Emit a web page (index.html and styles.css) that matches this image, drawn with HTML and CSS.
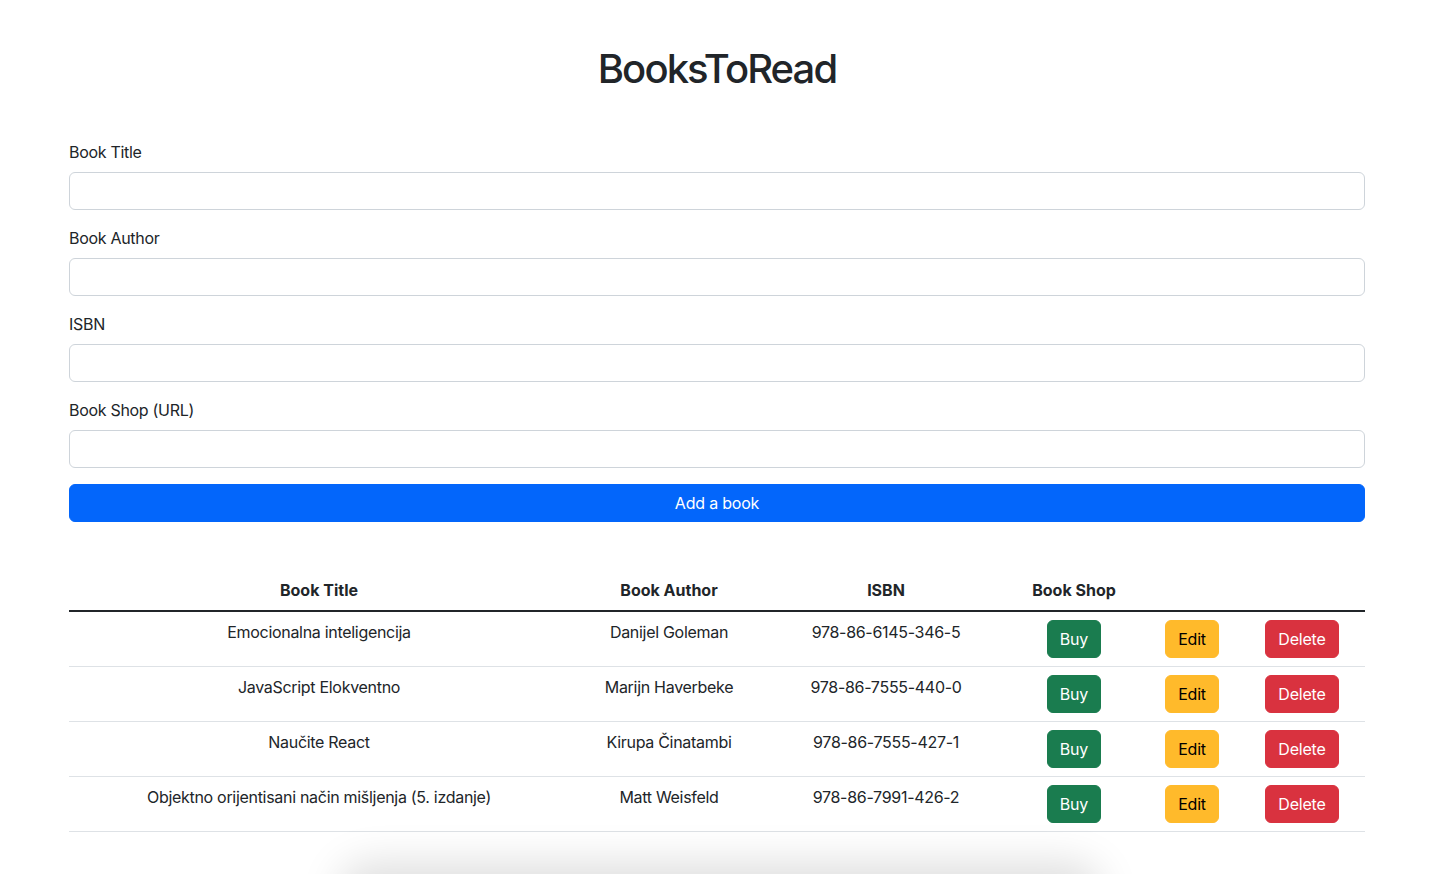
FILE: index.html
```html
<!DOCTYPE html>
<html lang="sr">
<head>
<meta charset="utf-8">
<title>BooksToRead</title>
<link rel="stylesheet" href="styles.css">
</head>
<body>
<div class="container">
  <h1 class="title">BooksToRead</h1>
  <form class="book-form">
    <div class="field">
      <label class="label" for="title">Book Title</label>
      <input class="input" id="title" type="text">
    </div>
    <div class="field">
      <label class="label" for="author">Book Author</label>
      <input class="input" id="author" type="text">
    </div>
    <div class="field">
      <label class="label" for="isbn">ISBN</label>
      <input class="input" id="isbn" type="text">
    </div>
    <div class="field">
      <label class="label" for="shop">Book Shop (URL)</label>
      <input class="input" id="shop" type="text">
    </div>
    <button type="button" class="btn btn-primary btn-block">Add a book</button>
  </form>

  <table class="books">
    <colgroup>
      <col class="c-title"><col class="c-author"><col class="c-isbn"><col class="c-shop"><col class="c-edit"><col class="c-delete">
    </colgroup>
    <thead>
      <tr><th>Book Title</th><th>Book Author</th><th>ISBN</th><th>Book Shop</th><th></th><th></th></tr>
    </thead>
    <tbody>
      <tr>
        <td>Emocionalna inteligencija</td><td>Danijel Goleman</td><td>978-86-6145-346-5</td>
        <td><button class="btn btn-success">Buy</button></td>
        <td><button class="btn btn-warning">Edit</button></td>
        <td><button class="btn btn-danger">Delete</button></td>
      </tr>
      <tr>
        <td>JavaScript Elokventno</td><td>Marijn Haverbeke</td><td>978-86-7555-440-0</td>
        <td><button class="btn btn-success">Buy</button></td>
        <td><button class="btn btn-warning">Edit</button></td>
        <td><button class="btn btn-danger">Delete</button></td>
      </tr>
      <tr>
        <td>Naučite React</td><td>Kirupa Činatambi</td><td>978-86-7555-427-1</td>
        <td><button class="btn btn-success">Buy</button></td>
        <td><button class="btn btn-warning">Edit</button></td>
        <td><button class="btn btn-danger">Delete</button></td>
      </tr>
      <tr>
        <td>Objektno orijentisani način mišljenja (5. izdanje)</td><td>Matt Weisfeld</td><td>978-86-7991-426-2</td>
        <td><button class="btn btn-success">Buy</button></td>
        <td><button class="btn btn-warning">Edit</button></td>
        <td><button class="btn btn-danger">Delete</button></td>
      </tr>
    </tbody>
  </table>
</div>
<div class="bottom-shadow"></div>
</body>
</html>
```

FILE: styles.css
```css
* { box-sizing: border-box; }
html, body { margin: 0; padding: 0; background: #fff; }
body {
  font-family: Inter, "Liberation Sans", sans-serif;
  font-size: 16px;
  line-height: 1.5;
  color: #212529;
  letter-spacing: -0.3px;
}
.container {
  width: 1296px;
  margin-left: 69px;
  padding-top: 45px;
}
.title {
  margin: 0 0 47px;
  font-size: 40px;
  font-weight: 500;
  line-height: 1.2;
  text-align: center;
  letter-spacing: -1.9px;
}
.field { margin-bottom: 16px; }
.label {
  display: block;
  margin-bottom: 8px;
  line-height: 24px;
}
.input {
  display: block;
  width: 100%;
  height: 38px;
  padding: 6px 12px;
  font: inherit;
  border: 1px solid #ced4da;
  border-radius: 6px;
  background: #fff;
}
.btn {
  display: inline-block;
  font: inherit;
  letter-spacing: -0.2px;
  line-height: 24px;
  padding: 6px 12px;
  border: 1px solid transparent;
  border-radius: 6px;
  color: #fff;
  cursor: pointer;
}
.btn-block { display: block; width: 100%; }
.btn-primary { background: #0366fb; border-color: #0366fb; }
.btn-success { background: #1a7c4f; border-color: #1a7c4f; }
.btn-warning { background: #ffba2b; border-color: #ffba2b; color: #000; }
.btn-danger { background: #d9323f; border-color: #d9323f; }

.books {
  width: 100%;
  margin-top: 48px;
  border-collapse: collapse;
  table-layout: fixed;
  text-align: center;
  vertical-align: top;
}
.c-title { width: 500px; }
.c-author { width: 200px; }
.c-isbn { width: 234px; }
.c-shop { width: 142px; }
.c-edit { width: 94px; }
.c-delete { width: 126px; }
.books th {
  font-weight: 700;
  letter-spacing: 0;
  padding: 8px;
  border-bottom: 2px solid #212529;
}
.books td {
  padding: 8px;
  vertical-align: top;
  border-bottom: 1px solid #dee2e6;
}
.bottom-shadow {
  position: fixed;
  left: 350px;
  width: 740px;
  bottom: -40px;
  height: 40px;
  border-radius: 20px;
  box-shadow: 0 0 40px 12px rgba(0, 0, 0, 0.13);
  background: #e6e6e6;
}
```
